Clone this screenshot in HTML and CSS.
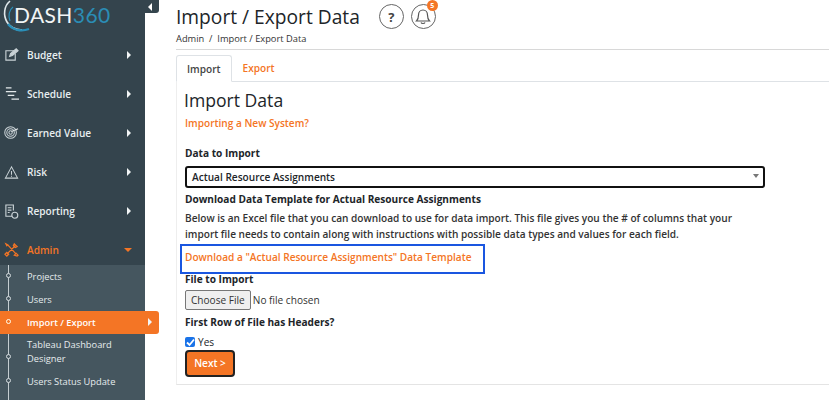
FILE: index.html
```html
<!DOCTYPE html>
<html lang="en">

<head>
    <meta charset="UTF-8">
    <title>Import / Export Data</title>
    <link rel="stylesheet" href="styles.css">
</head>

<body>
    <div class="page">
        <aside class="sidebar">
            <div class="collapse-tab"><span class="arrow-left"></span></div>
            <div class="logo">
                <svg class="logo-swoosh" width="34" height="34" viewBox="0 0 34 34" fill="none">
                    <path d="M8 1C2 6 1 15 5 22c3 5 9 8 15 8" stroke="#dfe7ea" stroke-width="1.600"/>
                    <path d="M11 7C7 10 6 16 8 21" stroke="#2a8fb8" stroke-width="1.200"/>
                    <path d="M6 24c5 6 13 8 21 5" stroke="#2a8fb8" stroke-width="2.400"/>
                </svg>
                <span class="logo-text">DASH<span class="logo-num">360</span></span>
            </div>
            <nav>
                <a class="menu-item">
                    <svg class="menu-icon" viewBox="0 0 16 16" fill="none" stroke="#c9d2d6" stroke-width="1.200">
                        <path d="M11 4H2v10h10V7"/><path d="M6 10l1-3 6-5 2 2-6 5z" fill="#c9d2d6"/>
                    </svg>
                    <span class="menu-label">Budget</span><span class="arrow-right"></span>
                </a>
                <a class="menu-item">
                    <svg class="menu-icon" viewBox="0 0 16 16" fill="none" stroke="#e4e9eb" stroke-width="1.400">
                        <path d="M2 2h6M2 6h11M4 10h7M8 14h8"/>
                    </svg>
                    <span class="menu-label">Schedule</span><span class="arrow-right"></span>
                </a>
                <a class="menu-item">
                    <svg class="menu-icon" viewBox="0 0 16 16" fill="none" stroke="#c9d2d6" stroke-width="1.100">
                        <circle cx="7" cy="8" r="6.200"/><circle cx="7" cy="8" r="4"/><circle cx="7" cy="8" r="1.800"/>
                        <path d="M8 7l7-3" stroke="#e4e9eb"/>
                    </svg>
                    <span class="menu-label">Earned Value</span><span class="arrow-right"></span>
                </a>
                <a class="menu-item">
                    <svg class="menu-icon" viewBox="0 0 16 16" fill="none" stroke="#c9d2d6" stroke-width="1.100">
                        <path d="M8 2L1.500 14h13z"/><path d="M8 6.500v4M8 11.500v1"/>
                    </svg>
                    <span class="menu-label">Risk</span><span class="arrow-right"></span>
                </a>
                <a class="menu-item">
                    <svg class="menu-icon" viewBox="0 0 16 16" fill="none" stroke="#c9d2d6" stroke-width="1.200">
                        <path d="M9 13H2V1h8v6"/><path d="M4 4h4M4 6.500h4M4 9h2"/><circle cx="11.500" cy="12" r="3.200"/>
                    </svg>
                    <span class="menu-label">Reporting</span><span class="arrow-right"></span>
                </a>
                <a class="menu-item menu-item-open">
                    <svg class="menu-icon" viewBox="0 0 16 16" fill="none" stroke="#f47525" stroke-width="1.300">
                        <path d="M3 13L12 4M4 3l9 10M11 2l3 3-2 1-2-2zM2 2l2 1-1 1zM1 13l2-2 2 2-2 2zM11 14l2-2 2 2-1 1z"/>
                    </svg>
                    <span class="menu-label">Admin</span><span class="arrow-down"></span>
                </a>
                <div class="submenu">
                    <a class="sub-item"><span class="dot"></span>Projects</a>
                    <a class="sub-item"><span class="dot"></span>Users</a>
                    <a class="sub-item sub-item-active"><span class="dot"></span>Import / Export<span class="arrow-right"></span></a>
                    <a class="sub-item sub-item-tall"><span class="dot"></span>Tableau Dashboard Designer</a>
                    <a class="sub-item"><span class="dot"></span>Users Status Update</a>
                </div>
            </nav>
        </aside>

        <main class="main">
            <div class="page-head">
                <div class="title-row">
                    <h1>Import / Export Data</h1>
                    <span class="round-btn help">?</span>
                    <span class="round-btn bell">
                        <svg width="16" height="17" viewBox="0 0 16 17" fill="none" stroke="#555" stroke-width="1.200">
                            <path d="M1.500 13h13c-1.500-1.500-2-3-2-6 0-3-2-5-4.500-5S3.500 4 3.500 7c0 3-.5 4.500-2 6z"/>
                            <path d="M6 14.500c.5 1.300 3.500 1.300 4 0"/>
                        </svg>
                        <span class="badge">5</span>
                    </span>
                </div>
                <div class="breadcrumb">Admin &nbsp;/&nbsp; Import / Export Data</div>
            </div>

            <div class="tabs">
                <a class="tab tab-active">Import</a>
                <a class="tab">Export</a>
            </div>

            <section class="tab-content">
                <h2>Import Data</h2>
                <a class="link new-system">Importing a New System?</a>

                <div class="label data-label">Data to Import</div>
                <div class="select">Actual Resource Assignments<span class="select-caret"></span></div>

                <div class="label template-label">Download Data Template for Actual Resource Assignments</div>
                <p class="desc">Below is an Excel file that you can download to use for data import. This file gives you the # of columns that your import file needs to contain along with instructions with possible data types and values for each field.</p>

                <a class="link template-link">Download a "Actual Resource Assignments" Data Template</a>

                <div class="label">File to Import</div>
                <div class="file-row"><span class="file-btn">Choose File</span><span>No file chosen</span></div>

                <div class="label first-row-label">First Row of File has Headers?</div>
                <div class="check-row">
                    <span class="checkbox">
                        <svg width="9" height="9" viewBox="0 0 9 9" fill="none" stroke="#fff" stroke-width="1.800"><path d="M1 4.500l2.500 2.500L8 1.500"/></svg>
                    </span>
                    <span>Yes</span>
                </div>
                <a class="next-btn">Next &gt;</a>
            </section>
        </main>
    </div>
</body>

</html>
```
FILE: styles.css
```css
html,
body {
    margin: 0;
    padding: 0;
    height: 400px;
    overflow: hidden;
    background: #fff;
    font-family: "Open Sans", Arial, sans-serif;
    color: #212529;
}

.page {
    display: flex;
    height: 400px;
    overflow: hidden;
}

/* sidebar */
.sidebar {
    position: relative;
    flex: 0 0 145px;
    width: 145px;
    background-color: #34444d;
}

.collapse-tab {
    position: absolute;
    top: 0;
    left: 145px;
    width: 14px;
    height: 13px;
    background: #34444d;
    border-bottom-right-radius: 3px;
    display: flex;
    align-items: center;
    justify-content: center;
}

.arrow-left {
    border-style: solid;
    border-width: 4px 4px 4px 0;
    border-color: transparent #fff transparent transparent;
    margin-right: 5px;
}

.logo {
    position: relative;
    height: 35px;
    padding-left: 14px;
}

.logo-swoosh {
    position: absolute;
    left: 2px;
    top: 0;
}

.logo-text {
    position: relative;
    display: block;
    padding-top: 1px;
    font-family: Lato, sans-serif;
    font-size: 21px;
    line-height: 27px;
    letter-spacing: 0.400px;
    color: #f2f5f6;
}

.logo-num {
    color: #2b8db5;
}

.menu-item {
    display: flex;
    align-items: center;
    height: 39.200px;
    padding-left: 4px;
    font-size: 10.100px;
    font-weight: 600;
    color: #e8eef0;
}

.menu-icon {
    width: 15px;
    height: 15px;
    flex: none;
}

.menu-label {
    margin-left: 8px;
    flex: 1;
}

.arrow-right {
    border-style: solid;
    border-width: 4px 0 4px 4px;
    border-color: transparent transparent transparent #f2f5f6;
    margin-right: 14px;
}

.arrow-down {
    border-style: solid;
    border-width: 4px 4px 0;
    border-color: #f47525 transparent transparent;
    margin-right: 13px;
}

.menu-item-open {
    box-sizing: border-box;
    height: 34px;
    padding-top: 4px;
    color: #f47525;
}

.submenu {
    position: relative;
    background-color: #45565f;
    height: 135px;
}

.submenu::before {
    content: "";
    position: absolute;
    left: 8px;
    top: 0;
    bottom: 0;
    width: 1px;
    background: #c4cdd1;
}

.sub-item {
    position: relative;
    display: flex;
    align-items: center;
    height: 23px;
    padding-left: 27px;
    font-size: 9.300px;
    font-weight: 400;
    color: #e6ecee;
}

.sub-item-tall {
    height: 36px;
    padding-right: 20px;
    line-height: 14px;
}

.sub-item-active {
    margin-right: -14px;
    background-color: #f47525;
    border-radius: 0 3px 3px 0;
    color: #fff;
    font-weight: 600;
    justify-content: space-between;
}

.sub-item-active .arrow-right {
    margin-right: 7px;
}

.dot {
    position: absolute;
    left: 6px;
    top: 50%;
    width: 3px;
    height: 3px;
    margin-top: -3px;
    border: 1px solid #d5dcdf;
    border-radius: 50%;
    background: #45565f;
}

.sub-item-active .dot {
    background: #f47525;
    border-color: #ffe;
}

.sub-item-tall .dot {
    margin-top: 2px;
}

/* main area */
.main {
    flex: 1;
    min-width: 0;
    padding-left: 31px;
}

.page-head {
    height: 49px;
    border-bottom: 1px solid #d8d8d8;
}

.title-row {
    display: flex;
    align-items: center;
    height: 33px;
}

h1 {
    margin: 0;
    font-size: 19.200px;
    font-weight: 500;
    color: #212529;
}

.round-btn {
    position: relative;
    display: flex;
    align-items: center;
    justify-content: center;
    box-sizing: border-box;
    width: 25px;
    height: 25px;
    border: 1px solid #666;
    border-radius: 50%;
}

.help {
    margin-left: 19px;
    font-size: 13px;
    font-weight: 700;
    color: #444;
}

.bell {
    margin-left: 7px;
}

.badge {
    position: absolute;
    top: -5px;
    right: -3px;
    width: 11px;
    height: 11px;
    border-radius: 50%;
    background: #f47525;
    color: #fff;
    font-size: 7px;
    font-weight: 700;
    line-height: 11px;
    text-align: center;
}

.breadcrumb {
    font-size: 9.300px;
    line-height: 12px;
    color: #333;
}

.tabs {
    display: flex;
    margin-top: 5px;
    height: 27px;
    box-sizing: border-box;
    border-bottom: 1px solid #dee2e6;
}

.tab {
    box-sizing: border-box;
    height: 27px;
    padding: 0 11px;
    font-size: 10.100px;
    font-weight: 600;
    line-height: 27px;
    color: #f47525;
}

.tab-active {
    padding: 0 10px;
    border: 1px solid #dee2e6;
    border-bottom-color: #fff;
    border-radius: 3px 3px 0 0;
    color: #444;
    background: #fff;
}

.tab-content {
    box-sizing: border-box;
    height: 303px;
    padding: 6px 0 0 8px;
    border-left: 1px solid #eee;
    border-bottom: 1px solid #e4e4e4;
}

h2 {
    margin: 0 0 0 -1px;
    font-size: 17.600px;
    font-weight: 400;
    line-height: 24px;
    color: #212529;
}

.link {
    display: block;
    font-size: 10.100px;
    font-weight: 600;
    color: #f47525;
}

.new-system {
    margin-top: 3px;
    line-height: 16px;
}

.label {
    font-size: 10.100px;
    font-weight: 700;
    line-height: 16px;
    color: #212529;
}

.data-label {
    margin-top: 14px;
}

.select {
    position: relative;
    box-sizing: border-box;
    width: 580px;
    height: 22px;
    margin-top: 5px;
    padding-left: 5px;
    border: 2px solid #111;
    border-radius: 3px;
    font-size: 10.100px;
    font-weight: 600;
    line-height: 18px;
}

.select-caret {
    position: absolute;
    right: 4px;
    top: 6px;
    border-style: solid;
    border-width: 4px 3px 0;
    border-color: #777 transparent transparent;
}

.template-label {
    margin-top: 3px;
}

.desc {
    width: 560px;
    margin: 3px 0 0;
    font-size: 10.100px;
    font-weight: 600;
    line-height: 16px;
    color: #333;
}

.template-link {
    box-sizing: border-box;
    width: 305px;
    height: 30px;
    margin: 2px 0 -3px -5px;
    padding-left: 3px;
    border: 2px solid #1a56e0;
    line-height: 23px;
    white-space: nowrap;
}

.file-row {
    display: flex;
    align-items: center;
    gap: 2px;
    margin-top: 3px;
    font-size: 10.100px;
    color: #333;
}

.file-btn {
    box-sizing: border-box;
    height: 20px;
    padding: 0 5px;
    border: 1px solid #777;
    border-radius: 2px;
    background: #efefef;
    line-height: 18px;
}

.first-row-label {
    margin-top: 4px;
}

.check-row {
    display: flex;
    align-items: center;
    gap: 3px;
    margin-top: 5px;
    font-size: 10.100px;
    line-height: 14px;
}

.checkbox {
    display: flex;
    align-items: center;
    justify-content: center;
    width: 10px;
    height: 10px;
    border-radius: 2px;
    background: #1a73e8;
}

.next-btn {
    display: block;
    box-sizing: border-box;
    width: 50px;
    height: 27px;
    margin-top: 1px;
    border: 2px solid #222;
    border-radius: 4px;
    background: #f47525;
    color: #fff;
    font-size: 10.100px;
    font-weight: 600;
    line-height: 23px;
    text-align: center;
}
```
